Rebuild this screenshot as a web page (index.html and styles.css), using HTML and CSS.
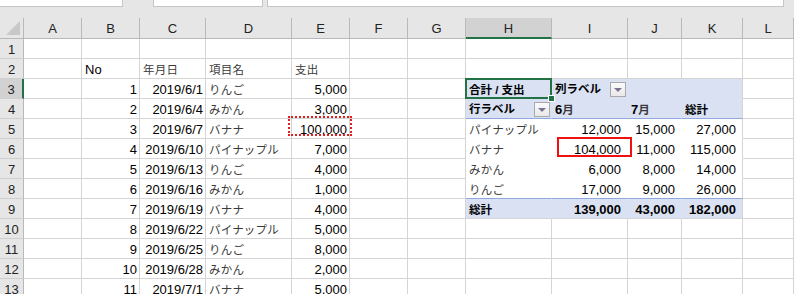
FILE: index.html
```html
<!DOCTYPE html>
<html lang="ja">
<head>
<meta charset="utf-8">
<title>Excel pivot</title>
<link rel="stylesheet" href="styles.css">
</head>
<body>
<div class="app">
  <div class="topbar">
    <div class="tbox tb1"></div>
    <div class="tbox tb2"></div>
    <div class="tbox tb3"></div>
  </div>
  <div class="sheet">
    <div class="ch corner"><span class="tri"></span></div>
    <div class="ch">A</div><div class="ch">B</div><div class="ch">C</div><div class="ch">D</div><div class="ch">E</div><div class="ch">F</div><div class="ch">G</div><div class="ch sel">H</div><div class="ch">I</div><div class="ch">J</div><div class="ch">K</div><div class="ch">L</div>

    <div class="rh">1</div>
    <div class="c"></div><div class="c"></div><div class="c"></div><div class="c"></div><div class="c"></div><div class="c"></div><div class="c"></div><div class="c"></div><div class="c"></div><div class="c"></div><div class="c"></div><div class="c"></div>

    <div class="rh">2</div>
    <div class="c"></div><div class="c">No</div><div class="c"><span class="j">年月日</span></div><div class="c"><span class="j">項目名</span></div><div class="c"><span class="j">支出</span></div><div class="c"></div><div class="c"></div><div class="c"></div><div class="c"></div><div class="c"></div><div class="c"></div><div class="c"></div>

    <div class="rh rsel">3</div>
    <div class="c"></div><div class="c r">1</div><div class="c r">2019/6/1</div><div class="c"><span class="j">りんご</span></div><div class="c r">5,000</div><div class="c"></div><div class="c"></div>
    <div class="c pv hd active"><span class="j b">合計 / 支出</span><span class="handle"></span></div>
    <div class="c pv hd split"><span class="j b">列ラベル</span><span class="dd"><span class="arr"></span></span></div>
    <div class="c pv hd"></div><div class="c pv hd kr"></div><div class="c"></div>

    <div class="rh">4</div>
    <div class="c"></div><div class="c r">2</div><div class="c r">2019/6/4</div><div class="c"><span class="j">みかん</span></div><div class="c r">3,000</div><div class="c"></div><div class="c"></div>
    <div class="c pv hd hb split"><span class="j b">行ラベル</span><span class="dd"><span class="arr"></span></span></div>
    <div class="c pv hd hb b">6<span class="j">月</span></div>
    <div class="c pv hd hb b">7<span class="j">月</span></div>
    <div class="c pv hd hb kr"><span class="j b">総計</span></div><div class="c"></div>

    <div class="rh">5</div>
    <div class="c"></div><div class="c r">3</div><div class="c r">2019/6/7</div><div class="c"><span class="j">バナナ</span></div><div class="c r">100,000</div><div class="c"></div><div class="c"></div>
    <div class="c pv"><span class="j">パイナップル</span></div><div class="c pv n">12,000</div><div class="c pv n">15,000</div><div class="c pv n kr">27,000</div><div class="c"></div>

    <div class="rh">6</div>
    <div class="c"></div><div class="c r">4</div><div class="c r">2019/6/10</div><div class="c"><span class="j">パイナップル</span></div><div class="c r">7,000</div><div class="c"></div><div class="c"></div>
    <div class="c pv"><span class="j">バナナ</span></div><div class="c pv n">104,000</div><div class="c pv n">11,000</div><div class="c pv n kr">115,000</div><div class="c"></div>

    <div class="rh">7</div>
    <div class="c"></div><div class="c r">5</div><div class="c r">2019/6/13</div><div class="c"><span class="j">りんご</span></div><div class="c r">4,000</div><div class="c"></div><div class="c"></div>
    <div class="c pv"><span class="j">みかん</span></div><div class="c pv n">6,000</div><div class="c pv n">8,000</div><div class="c pv n kr">14,000</div><div class="c"></div>

    <div class="rh">8</div>
    <div class="c"></div><div class="c r">6</div><div class="c r">2019/6/16</div><div class="c"><span class="j">みかん</span></div><div class="c r">1,000</div><div class="c"></div><div class="c"></div>
    <div class="c pv"><span class="j">りんご</span></div><div class="c pv n">17,000</div><div class="c pv n">9,000</div><div class="c pv n kr">26,000</div><div class="c"></div>

    <div class="rh">9</div>
    <div class="c"></div><div class="c r">7</div><div class="c r">2019/6/19</div><div class="c"><span class="j">バナナ</span></div><div class="c r">4,000</div><div class="c"></div><div class="c"></div>
    <div class="c pv tot"><span class="j b">総計</span></div><div class="c pv tot n b">139,000</div><div class="c pv tot n b">43,000</div><div class="c pv tot n b kr">182,000</div><div class="c"></div>

    <div class="rh">10</div>
    <div class="c"></div><div class="c r">8</div><div class="c r">2019/6/22</div><div class="c"><span class="j">パイナップル</span></div><div class="c r">5,000</div><div class="c"></div><div class="c"></div><div class="c"></div><div class="c"></div><div class="c"></div><div class="c"></div><div class="c"></div>

    <div class="rh">11</div>
    <div class="c"></div><div class="c r">9</div><div class="c r">2019/6/25</div><div class="c"><span class="j">りんご</span></div><div class="c r">8,000</div><div class="c"></div><div class="c"></div><div class="c"></div><div class="c"></div><div class="c"></div><div class="c"></div><div class="c"></div>

    <div class="rh">12</div>
    <div class="c"></div><div class="c r">10</div><div class="c r">2019/6/28</div><div class="c"><span class="j">みかん</span></div><div class="c r">2,000</div><div class="c"></div><div class="c"></div><div class="c"></div><div class="c"></div><div class="c"></div><div class="c"></div><div class="c"></div>

    <div class="rh">13</div>
    <div class="c"></div><div class="c r">11</div><div class="c r">2019/7/1</div><div class="c"><span class="j">バナナ</span></div><div class="c r">5,000</div><div class="c"></div><div class="c"></div><div class="c"></div><div class="c"></div><div class="c"></div><div class="c"></div><div class="c"></div>

    <div class="mark dotted"></div>
    <div class="mark solid"></div>
  </div>
</div>
</body>
</html>
```

FILE: styles.css
```css
* { box-sizing: border-box; }
html, body { margin: 0; padding: 0; background: #fff; overflow: hidden; }
.app {
  width: 794px;
  height: 294px;
  overflow: hidden;
  background: #e6e6e6;
  font-family: "Liberation Sans", "Noto Sans CJK JP", sans-serif;
  font-size: 13px;
  color: #000;
}
.topbar {
  height: 18px;
  position: relative;
  display: flex;
  align-items: flex-start;
}
.tbox {
  height: 7px;
  background: #fff;
  border: 1px solid #c6c6c6;
  border-top: none;
}
.tb1 { width: 123px; border-left: none; }
.tb2 { width: 110px; margin-left: 30px; }
.tb3 { width: 517px; margin-left: 4px; }

.sheet {
  position: relative;
  display: grid;
  grid-template-columns: 24px 58px 58px 66px 86px 58px 58px 58px 86px 76px 54px 61px 1fr;
  grid-template-rows: 21px repeat(13, 20px);
  background: #fff;
}
.ch {
  background: #e6e6e6;
  border-right: 1px solid #b9b9b9;
  border-bottom: 1px solid #b9b9b9;
  display: flex;
  align-items: center;
  justify-content: center;
  color: #222;
  padding-top: 1px;
}
.ch.sel {
  background: #d2d2d2;
  border-bottom: 2px solid #217346;
  padding-top: 2px;
}
.corner { position: relative; }
.tri {
  position: absolute;
  right: 3px;
  bottom: 3px;
  width: 0;
  height: 0;
  border-left: 14px solid transparent;
  border-bottom: 14px solid #c8c8c8;
}
.rh {
  background: #e6e6e6;
  border-right: 1px solid #b9b9b9;
  border-bottom: 1px solid #cfcfcf;
  display: flex;
  align-items: center;
  justify-content: center;
  color: #222;
  padding-top: 1px;
}
.rh.rsel {
  background: #d2d2d2;
  border-right: 2px solid #217346;
}
.c {
  border-right: 1px solid #d4d4d4;
  border-bottom: 1px solid #d4d4d4;
  padding: 2px 2px 0 3px;
  line-height: 18px;
  white-space: nowrap;
  overflow: visible;
  position: relative;
}
.c.r { text-align: right; }
.j { font-size: 11.5px; color: #3a3a3a; letter-spacing: 0.2px; }
.b { font-weight: bold; }
.j.b { color: #000; letter-spacing: 0; }

.pv { background: #fff; border-right-color: #fff; border-bottom-color: #fff; }
.pv.kr { border-right-color: #d4d4d4; }
.pv.n { text-align: right; padding-right: 6px; }
.pv.hd { background: #d9e1f2; border-right-color: #d9e1f2; border-bottom-color: #d9e1f2; }
.pv.hd.kr { border-right-color: #d4d4d4; }
.pv.hb { border-bottom-color: #8ea9db; }
.pv.tot { background: #d9e1f2; border-right-color: #d9e1f2; border-bottom-color: #d4d4d4; border-top: 1px solid #8ea9db; margin-top: -1px; }
.pv.tot.kr { border-right-color: #d4d4d4; }

.split {
  display: flex;
  justify-content: space-between;
  align-items: flex-end;
  padding-right: 1px;
  padding-bottom: 1px;
}
.split .j { align-self: center; padding-top: 0; }
.dd {
  width: 16px;
  height: 15px;
  border: 1px solid #a9a9a9;
  background: linear-gradient(#fbfbfb, #e9e9e9);
  display: flex;
  align-items: center;
  justify-content: center;
}
.arr {
  width: 0;
  height: 0;
  border-left: 4px solid transparent;
  border-right: 4px solid transparent;
  border-top: 4px solid #7d7296;
  margin-top: 1px;
}

.active::after {
  content: "";
  position: absolute;
  left: -1px;
  top: -1px;
  right: -1px;
  bottom: -1px;
  border: 2px solid #217346;
  pointer-events: none;
}
.handle {
  position: absolute;
  right: -4px;
  bottom: -4px;
  width: 7px;
  height: 7px;
  background: #217346;
  border: 1px solid #fff;
  z-index: 2;
}

.mark { position: absolute; pointer-events: none; }
.mark.dotted {
  left: 288px;
  top: 98px;
  width: 64px;
  height: 20px;
  border: 2px dotted #e02020;
}
.mark.solid {
  left: 557px;
  top: 119px;
  width: 75px;
  height: 20px;
  border: 2px solid #f01010;
}
```
